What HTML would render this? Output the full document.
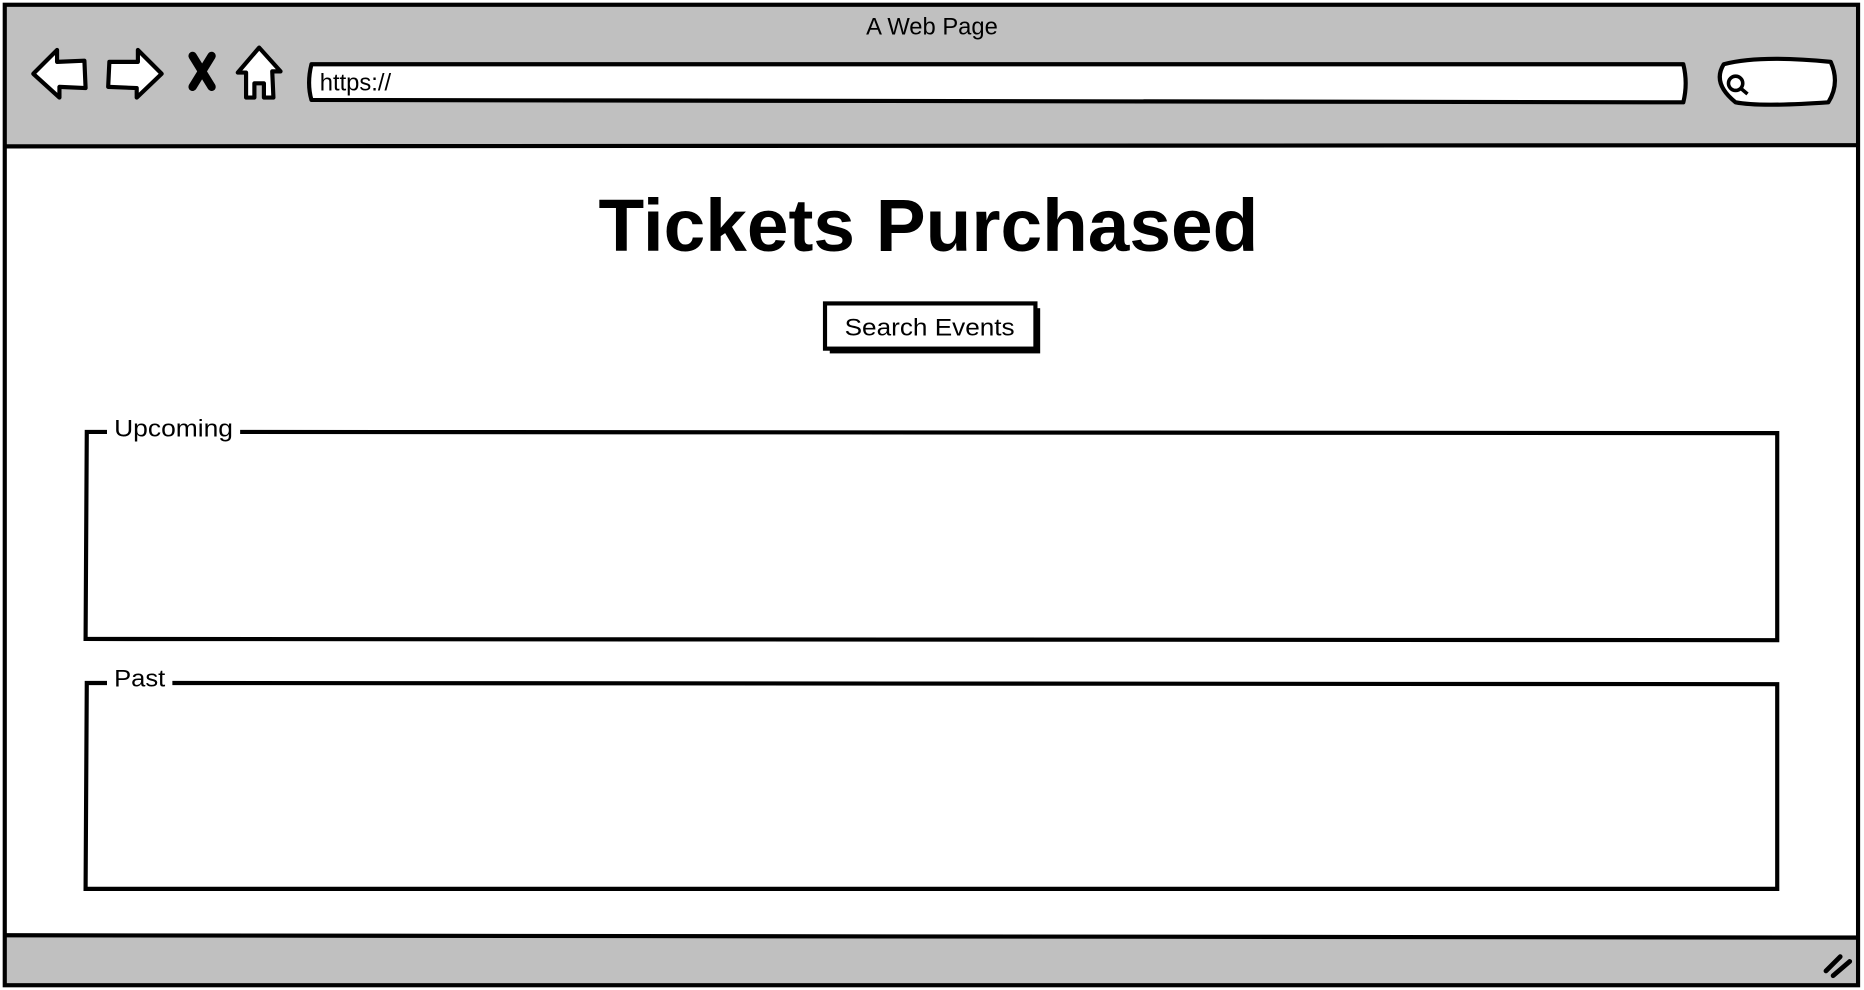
<!DOCTYPE html>
<html><head><meta charset="utf-8"><style>
html,body{margin:0;padding:0;background:#fff;width:1864px;height:990px;overflow:hidden}
svg{display:block}
text{font-family:"Liberation Sans",sans-serif;fill:#000}
</style></head><body>
<svg width="1864" height="990" viewBox="0 0 1568 832" preserveAspectRatio="none" xmlns="http://www.w3.org/2000/svg">
<rect x="0" y="0" width="1568" height="832" fill="#fff"/>
<rect x="4" y="4" width="1559" height="119" fill="#c0c0c0"/>
<rect x="4" y="786" width="1559" height="42" fill="#c0c0c0"/>
<rect x="4" y="4" width="1559" height="824" fill="none" stroke="#000" stroke-width="3.5"/>
<line x1="4" y1="123" x2="1563" y2="122" stroke="#000" stroke-width="3.5"/>
<line x1="4" y1="786" x2="1563" y2="788" stroke="#000" stroke-width="3.5"/>
<text x="784" y="29" text-anchor="middle" font-size="20">A Web Page</text>
<g fill="#fff" stroke="#000" stroke-width="3.5" stroke-linejoin="round">
<path d="M28 62 L48 42 L48 52 L71 51 L72 74 L50 73 L50 82 Z"/>
<path d="M136 62 L116 42 L116 52 L92 52 L91 73 L115 74 L115 82 Z"/>
<path d="M218 40 L236 60 L229 60 L230 82 L222 82 L222 70 L214 70 L214 82 L207 82 L207 61 L200 61 Z"/>
<path d="M262 54 L1416 54 Q1420 70 1416 86 L262 84 Q258 70 262 54 Z"/>
<path d="M1450 54 Q1480 46 1540 52 Q1548 70 1538 86 Q1480 90 1460 86 Q1440 70 1450 54 Z"/>
</g>
<g stroke="#000" stroke-width="7" stroke-linecap="round">
<line x1="162" y1="47" x2="178" y2="73"/><line x1="178" y1="47" x2="162" y2="73"/>
</g>
<circle cx="1460" cy="70" r="6" fill="none" stroke="#000" stroke-width="3"/>
<line x1="1464" y1="74" x2="1470" y2="79" stroke="#000" stroke-width="3"/>
<text x="269" y="76" font-size="20">https://</text>
<text x="781" y="211" text-anchor="middle" font-size="62" font-weight="bold" textLength="555" lengthAdjust="spacingAndGlyphs">Tickets Purchased</text>
<rect x="698" y="259" width="177" height="38" fill="#000"/>
<rect x="694" y="255" width="177" height="38" fill="#fff" stroke="#000" stroke-width="3.5"/>
<text x="782" y="282" text-anchor="middle" font-size="20" textLength="143" lengthAdjust="spacingAndGlyphs">Search Events</text>
<g fill="none" stroke="#000" stroke-width="3.5">
<path d="M90 363 L73 363 L72 537 L1495 538 L1495 364 L202 363"/>
<path d="M90 574 L73 574 L72 747 L1495 747 L1495 575 L145 574"/>
</g>
<text x="96" y="367" font-size="20" textLength="100" lengthAdjust="spacingAndGlyphs">Upcoming</text>
<text x="96" y="577" font-size="20" textLength="43" lengthAdjust="spacingAndGlyphs">Past</text>
<g stroke="#000" stroke-width="4" stroke-linecap="round">
<line x1="1536" y1="816" x2="1548" y2="804"/><line x1="1542" y1="820" x2="1556" y2="808"/>
</g>
</svg>
</body></html>
